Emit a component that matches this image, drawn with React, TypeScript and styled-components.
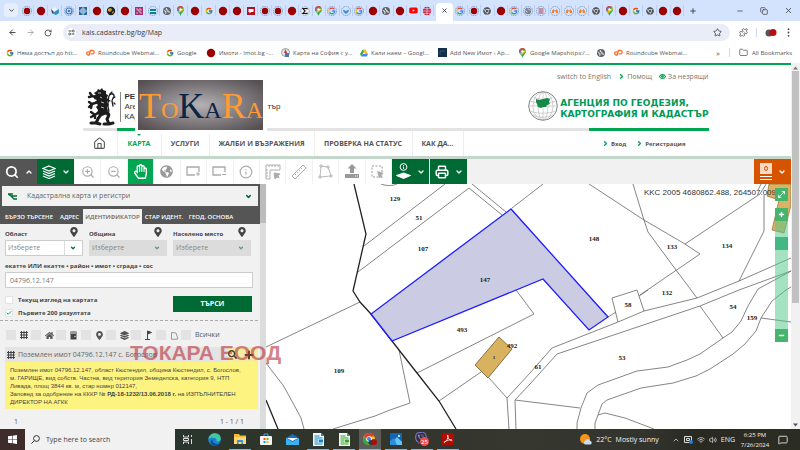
import React from 'react';
import styled, { createGlobalStyle, css } from 'styled-components';
import {
  ArrowLeft, ArrowRight, RotateCw, ChevronDown, ChevronUp, ChevronRight, Star, Puzzle, Folder,
  Search, ZoomIn, ZoomOut, Info, House, Plus, X, Minus, Copy, Printer, EyeIcon,
  MessageSquare, Volume2, Wifi, Check,
} from 'lucide-react';
import { FaYoutube, FaRegHandPaper, FaGlobeAmericas, FaMapMarkerAlt, FaHome, FaChrome, FaViber, FaSearch, FaLayerGroup } from 'react-icons/fa';
import { FcGoogle } from 'react-icons/fc';

const UI = '"Open Sans", "Noto Sans", sans-serif';
const GREEN = '#00a651';
const DARK_GREEN = '#006a35';
const SLATE = '#555555';

const GlobalStyle = createGlobalStyle`
  * { box-sizing: border-box; }
  body { margin: 0; font-family: ${UI}; font-size: 7px; line-height: 10px; color: #555; background: #fff; }
  button { border: 0; padding: 0; margin: 0; background: none; font: inherit; color: inherit; }
  input, select { font: inherit; margin: 0; }
  a { color: inherit; text-decoration: none; }
  svg { display: block; flex: none; }
`;

const Screen = styled.div`
  display: flex;
  flex-direction: column;
  min-height: 100vh;
  overflow: hidden;
`;

/* ---------- browser chrome ---------- */

const TabStrip = styled.div`
  display: flex;
  align-items: stretch;
  height: 21px;
  background: #d3e2fd;
  color: #333;
`;
const TabSearch = styled.button`
  width: 14px;
  height: 14px;
  margin: 3px 2px 0 4px;
  border-radius: 4px;
  background: #e6eefc;
  display: grid;
  place-items: center;
`;
const TabGroup = styled.div<{ $basis: number }>`
  display: flex;
  flex: 0 0 ${(p) => p.$basis}px;
`;
const TabButton = styled.button`
  flex: 1;
  display: grid;
  place-items: center;
  border-right: 1px solid #b9cff5;
  height: 11px;
  margin-top: 5px;
`;
const ActiveTab = styled.button`
  width: 17px;
  margin: 3px 1px 0 2px;
  padding-bottom: 3px;
  background: #fff;
  border-radius: 4px 4px 0 0;
  display: grid;
  place-items: center;
`;
const NewTab = styled.button`
  width: 18px;
  display: grid;
  place-items: center;
`;
const WindowButtons = styled.div`
  display: flex;
  margin-left: auto;
  button { width: 24px; display: grid; place-items: center; }
`;
const AddressRow = styled.div`
  display: flex;
  align-items: center;
  height: 23px;
  padding: 0 7px;
  color: #444;
  gap: 8px;
`;
const NavButton = styled.button`
  width: 10px;
  display: grid;
  place-items: center;
`;
const AddressPill = styled.label`
  flex: 1;
  display: flex;
  align-items: center;
  height: 17px;
  margin-left: 2px;
  padding: 0 8px 0 4px;
  gap: 6px;
  border-radius: 9px;
  background: #eaedf7;
`;
const AddressInput = styled.input`
  flex: 1;
  border: 0;
  background: none;
  padding: 0;
  font-size: 7px;
  color: #3c3c3c;
`;
const Divider = styled.span`
  width: 1px;
  height: 9px;
  background: #c9d9f5;
`;
const BookmarkBar = styled.nav`
  display: flex;
  align-items: center;
  height: 19px;
  padding: 0 8px 2px 6px;
  color: #555;
`;
const Bookmark = styled.a<{ $width: number }>`
  display: flex;
  align-items: center;
  gap: 3px;
  width: ${(p) => p.$width}px;
  font-size: 6px;
  white-space: nowrap;
`;
const BookmarkEnd = styled.div`
  display: flex;
  align-items: center;
  gap: 9px;
  margin-left: auto;
  font-size: 6px;
  a { display: flex; align-items: center; gap: 4px; }
  span { font-size: 8px; }
`;

type Glyph = 'r' | 'R' | 'd' | 'b' | 'q' | 'w' | 'p' | 't' | 'o' | 'm' | 'g' | 'G' | 'k' | 's' | 'h' | 'y' | 'n' | 'c' | 'a' | 'l' | 'x';

function PinGlyph() {
  return (
    <svg width="9" height="10" viewBox="0 0 9 10">
      <path d="M4.5 0C2.6 0 1 1.5 1 3.4 1 5.8 3.8 6.800 4.500 10 5.200 6.800 8 5.800 8 3.400 8 1.500 6.400 0 4.500 0Z" fill="#34a853" />
      <path d="M4.500 0C2.600 0 1 1.500 1 3.400L2 5.200 6.600 .6Z" fill="#ea4335" />
      <path d="M6.600 .6 2 5.200 1 3.400Z" fill="#4285f4" />
      <path d="M2 5.200 7.500 2 8 3.400 3.400 6.900Z" fill="#fbbc04" />
      <circle cx="4.500" cy="3.400" r="1.200" fill="#fff" />
    </svg>
  );
}

function LoopGlyph() {
  return (
    <svg width="9" height="8" viewBox="0 0 9 8" fill="none" stroke="#ff6c2c" strokeWidth="1.300" strokeLinecap="round">
      <path d="M4 2.800H2.300a1.600 1.600 0 0 0 0 3.200H3.200L4.500 1.500H6.500a1.700 1.700 0 0 1 0 3.400H5.300" />
    </svg>
  );
}

function GlobeGlyph({ color = '#5f6368' }: { color?: string }) {
  return (
    <svg width="8" height="8" viewBox="0 0 8 8">
      <circle cx="4" cy="4" r="4" fill={color} />
      <path d="M.8 3.400 3 4.500 2.800 6.800M3.500 1l-.4 1.500 2 .8-.3 1.500 2.200.4" stroke="#fff" strokeWidth=".9" fill="none" />
    </svg>
  );
}

function Favicon({ kind }: { kind: Glyph }) {
  const ring = <circle cx="5" cy="5" r="4.600" fill="none" stroke="#5f7fae" strokeWidth=".7" strokeDasharray="1.500 .8" />;
  if (kind === 'g') return <FcGoogle size={8} />;
  if (kind === 'm') return <PinGlyph />;
  if (kind === 'y') return <FaYoutube size={9} color="#f00" />;
  if (kind === 'o') return <GlobeGlyph />;
  if (kind === 'c') return <FaChrome size={8} color="#555" />;
  return (
    <svg width="10" height="10" viewBox="0 0 10 10">
      {kind === 'r' && <circle cx="5" cy="5" r="4.200" fill="#9b0000" />}
      {kind === 'R' && <>{ring}<circle cx="5" cy="5" r="3.200" fill="#9b0000" /></>}
      {kind === 'd' && <><path d="M1 4 5 1l3 3-3 4-4-1Z" fill="#eef3f8" /><path d="M4 6l5-3v4L6 9 2 7.500Z" fill="#2b8fd0" /><path d="M1 3l3 3-2 1.500Z" fill="#444" /></>}
      {kind === 'b' && <>{ring}<circle cx="5" cy="5" r="3" fill="none" stroke="#4379b2" strokeWidth="1.200" /><circle cx="5" cy="5" r="1.300" fill="#4379b2" /></>}
      {kind === 'q' && <><rect x="1" y="1" width="8" height="8" fill="#24639b" /><path d="M3 3h4v4H3zM1 5h8M5 1v8" stroke="#d3e2fd" strokeWidth=".8" fill="none" /></>}
      {kind === 'w' && <><circle cx="5" cy="5" r="4.200" fill="#222" /><path d="M2 3l3-1 1 2-2 2-2-1ZM6 6l2-1-1 3Z" fill="#c8a83a" /></>}
      {kind === 'p' && <><rect x="1" y="1" width="8" height="8" fill="#a03070" /><path d="M2 3h2v2h2v2h2M6 2v2h2M2 7h2" stroke="#f0d0e0" strokeWidth=".8" fill="none" /></>}
      {kind === 't' && <>{ring}<path d="M2 3h6v2H2zM2 6h6v2H2z" fill="#0c8088" /></>}
      {kind === 'k' && <><rect x="1" y="1" width="8" height="8" fill="#b01020" /><path d="M2.500 3h5v3H5L3.500 7.500V6h-1Z" fill="#fff" /></>}
      {kind === 's' && <><circle cx="5" cy="5" r="4.200" fill="#e8edf6" stroke="#777" strokeWidth=".6" strokeDasharray="1.500 .8" /><path d="M7 3.300V2.500H3L5 5 3 7.500h4V6.700" stroke="#111" strokeWidth="1.200" fill="none" /></>}
      {kind === 'G' && <>{ring}<path d="M7.300 3.200A3 3 0 0 0 2.700 3.200" stroke="#ea4335" strokeWidth="1.300" fill="none" /><path d="M2.700 3.200A3 3 0 0 0 2.600 6.500" stroke="#fbbc04" strokeWidth="1.300" fill="none" /><path d="M2.600 6.500A3 3 0 0 0 6.800 7.200" stroke="#34a853" strokeWidth="1.300" fill="none" /><path d="M6.800 7.200A3 3 0 0 0 7.700 5H5.200" stroke="#4285f4" strokeWidth="1.300" fill="none" /></>}
      {kind === 'h' && <>{ring}<path d="M2 3.500 5 5l3-1.500L7.500 6 5 8 2.500 6Z" fill="#3f8fd4" /></>}
      {kind === 'n' && <><circle cx="5" cy="5" r="4.200" fill="#d3122a" /><path d="M0 5h10M5 0v10M1 2.700h8M1 7.300h8" stroke="#d3e2fd" strokeWidth=".7" /></>}
      {kind === 'a' && <>{ring}<path d="M2 7V5l1.500-2L5 5l1.500-2L8 5v2H6V5.500H4V7Z" fill="#f58220" /></>}
      {kind === 'l' && <>{ring}<path d="M2.500 3h5M2.500 5h5M2.500 7h5" stroke="#a04050" strokeWidth="1" /></>}
      {kind === 'x' && <>{ring}<circle cx="5" cy="5" r="3.200" fill="#7b828c" /><path d="M2.500 4.500 4.500 6M5 2.500l2 2" stroke="#fff" strokeWidth=".8" /></>}
    </svg>
  );
}

const firstTabs = 'RrdbqrwrptomrgrrkR'.split('') as Glyph[];
const secondTabs = 'RrsmGhGroryn'.split('') as Glyph[];
const thirdTabs = 'GRcrGxlaaacmrgcrr'.split('') as Glyph[];

function Tabs({ items, basis }: { items: Glyph[]; basis: number }) {
  return (
    <TabGroup $basis={basis}>
      {items.map((k, i) => (
        <TabButton key={i} aria-label={`Tab ${i + 1}`}><Favicon kind={k} /></TabButton>
      ))}
    </TabGroup>
  );
}

const bookmarks: { width: number; label: string; icon: React.ReactNode }[] = [
  { width: 80, label: 'Няма достъп до htt...', icon: <FcGoogle size={8} /> },
  { width: 80, label: 'Roundcube Webmai...', icon: <LoopGlyph /> },
  { width: 40, label: 'Google', icon: <FcGoogle size={8} /> },
  { width: 75, label: 'Имоти - Imot.bg -...', icon: <Favicon kind="r" /> },
  { width: 79, label: 'Карта на София с у...', icon: <svg width="9" height="9" viewBox="0 0 9 9"><circle cx="4.500" cy="4.500" r="4" fill="#e8e8e8" stroke="#777" strokeWidth=".7" /><path d="M4.500 1 3 5h3Z" fill="#c33" /><rect x="4" y="5" width="4" height="4" fill="#4479b8" /></svg> },
  { width: 78, label: 'Кали наем – Googl...', icon: <svg width="8" height="8" viewBox="0 0 8 8"><path d="M2.700.5h2.600L8 5H5.300Z" fill="#fbbc04" /><path d="M2.700.5 4 2.700 1.300 7.500 0 5Z" fill="#34a853" /><path d="M2.700 5H8L6.700 7.500H1.300Z" fill="#4285f4" /></svg> },
  { width: 80, label: 'Add New Имот ‹ Ар...', icon: <svg width="9" height="9" viewBox="0 0 9 9"><rect width="9" height="9" fill="#12304e" /><path d="M2 7V3h5" stroke="#35506c" fill="none" /></svg> },
  { width: 79, label: 'Google Mapshttps:/...', icon: <PinGlyph /> },
  { width: 17, label: '', icon: <GlobeGlyph /> },
  { width: 80, label: 'Roundcube Webmai...', icon: <LoopGlyph /> },
];

function BrowserChrome() {
  return (
    <header>
      <TabStrip>
        <TabSearch aria-label="Search tabs"><ChevronDown size={7} strokeWidth={3} /></TabSearch>
        <Tabs items={firstTabs} basis={252} />
        <Tabs items={secondTabs} basis={162} />
        <ActiveTab aria-label="Close tab"><X size={7} strokeWidth={3} /></ActiveTab>
        <Tabs items={thirdTabs} basis={230} />
        <NewTab aria-label="New tab"><Plus size={8} strokeWidth={2.500} /></NewTab>
        <WindowButtons>
          <button aria-label="Minimize"><Minus size={8} /></button>
          <button aria-label="Restore"><Copy size={8} /></button>
          <button aria-label="Close"><X size={9} /></button>
        </WindowButtons>
      </TabStrip>
      <AddressRow>
        <NavButton aria-label="Back"><ArrowLeft size={9} strokeWidth={2.500} /></NavButton>
        <NavButton aria-label="Forward"><ArrowRight size={9} color="#999" /></NavButton>
        <NavButton aria-label="Reload"><RotateCw size={8} strokeWidth={2.500} /></NavButton>
        <AddressPill>
          <svg width="9" height="9" viewBox="0 0 9 9">
            <circle cx="4.500" cy="4.500" r="4.500" fill="#fff" />
            <path d="M1.500 3h3M4.500 6h3" stroke="#444" strokeWidth="1" />
            <circle cx="6.300" cy="3" r="1" fill="none" stroke="#444" strokeWidth=".8" />
            <circle cx="2.700" cy="6" r="1" fill="none" stroke="#444" strokeWidth=".8" />
          </svg>
          <AddressInput aria-label="Address" defaultValue="kais.cadastre.bg/bg/Map" />
          <Star size={9} strokeWidth={2.200} />
        </AddressPill>
        <NavButton aria-label="Extensions"><Puzzle size={9} /></NavButton>
        <Divider />
        <NavButton aria-label="Profile">
          <svg width="12" height="8" viewBox="0 0 12 8"><circle cx="4" cy="4" r="3.500" fill="#555" /><circle cx="8" cy="3.500" r="3.500" fill="#b80d12" /></svg>
        </NavButton>
        <NavButton aria-label="Menu">
          <svg width="3" height="9" viewBox="0 0 3 9" fill="#444"><circle cx="1.500" cy="1.200" r=".9" /><circle cx="1.500" cy="4.500" r=".9" /><circle cx="1.500" cy="7.800" r=".9" /></svg>
        </NavButton>
      </AddressRow>
      <BookmarkBar>
        {bookmarks.map((b, i) => (
          <Bookmark key={i} href="#" $width={b.width} aria-label={b.label || 'Bookmark'}>{b.icon}{b.label}</Bookmark>
        ))}
        <BookmarkEnd>
          <span>»</span>
          <Divider />
          <a href="#"><Folder size={9} />All Bookmarks</a>
        </BookmarkEnd>
      </BookmarkBar>
    </header>
  );
}

/* ---------- site header ---------- */

const Site = styled.div`
  flex: 1;
  display: flex;
`;
const SitePage = styled.div`
  flex: 1;
  min-width: 0;
  display: flex;
  flex-direction: column;
  border-top: 2px solid ${GREEN};
`;
const PageScroll = styled.div`
  width: 9px;
  display: flex;
  flex-direction: column;
  align-items: center;
  padding: 3px 0 2px;
  background: #f1f1f1;
`;
const ScrollThumb = styled.div`
  width: 7px;
  height: 232px;
  margin: 1px 0 auto;
  background: #c1c1c1;
`;
const SiteHeader = styled.div`
  position: relative;
  width: 626px;
  max-width: 100%;
  margin: 0 auto;
`;
const UtilityLinks = styled.nav`
  display: flex;
  justify-content: flex-end;
  align-items: center;
  gap: 7px;
  height: 23px;
  color: #777;
  a { display: flex; align-items: center; gap: 2px; }
`;
const BrandRow = styled.div`
  display: flex;
  align-items: center;
  height: 40px;
  padding: 0 0 3px 4px;
`;
const Ministry = styled.div`
  margin-left: 4px;
  padding-left: 4px;
  border-left: 1px solid #888;
  font-family: "Liberation Sans", sans-serif;
  font-size: 8px;
  line-height: 10px;
  color: #333;
  width: 161px;
  div { display: flex; justify-content: space-between; }
`;
const Agency = styled.a`
  display: flex;
  align-items: center;
  gap: 2px;
  margin-left: auto;
  font-family: "DejaVu Sans", sans-serif;
  font-weight: bold;
  font-size: 9px;
  line-height: 11px;
  color: #009a58;
  white-space: nowrap;
  padding-top: 4px;
  svg { margin-bottom: 5px; }
`;
const BrandRule = styled.div`
  display: flex;
  height: 3px;
`;
const RulePart = styled.span<{ $width?: number; $on?: boolean }>`
  flex: ${(p) => (p.$width ? `0 0 ${p.$width}px` : 1)};
  background: ${(p) => (p.$on ? GREEN : '#e3e3e3')};
`;
const MainNav = styled.nav`
  display: flex;
  height: 25px;
  font-weight: bold;
  white-space: nowrap;
`;
const MainLink = styled.a<{ $width: number; $active?: boolean }>`
  position: relative;
  display: grid;
  place-items: center;
  width: ${(p) => p.$width}px;
  border-right: 1px solid #eee;
  color: ${(p) => (p.$active ? GREEN : '#555')};
  ${(p) => p.$active && css`
    &::before {
      content: '';
      position: absolute;
      top: 1px;
      left: 50%;
      margin-left: -4px;
      border: 4px solid transparent;
      border-top-color: ${GREEN};
    }
  `}
`;
const AccountLinks = styled.div`
  display: flex;
  align-items: center;
  gap: 10px;
  margin-left: auto;
  padding-right: 23px;
  font-size: 6px;
  a { display: flex; align-items: center; gap: 2px; }
`;
const TokaraPlate = styled.div`
  position: absolute;
  left: 52px;
  top: 13px;
  padding: 2px 4px 4px 3px;
  background: #fff;
`;

function Lion() {
  return (
    <svg width="29" height="38" viewBox="0 0 29 38">
      <g fill="none" stroke="#1c1c1c" strokeLinecap="round" strokeLinejoin="round">
        <path d="M20 27C25 22 19 20 21 15c1-3 0-5 1-7 1-3 5-3 5 0 0 2-2 3-2 5l1 5" strokeWidth="1.300" />
        <path d="M11 14 5 16 2 14M5 16l-3 3M5 16l-1 4" strokeWidth="2.400" />
        <path d="M10 10 5 8 2 9M5 8 3 5" strokeWidth="2.400" />
        <path d="M12 24 8 27 4 24M8 27l-4 2M8 27v3" strokeWidth="2.400" />
        <path d="M19 25c5 1 2 4 1 6l2 5h-5M22 36l4-1" strokeWidth="3" />
        <path d="M14 25c0 4-3 4-3 6l-2 4H4M9 35l4 1" strokeWidth="3" />
        <path d="M23 6l2-2M26 10l2-1M23 13l-2-1M27 15l1 1" strokeWidth="1.200" />
      </g>
      <path d="M9 7 7 5l3-2 1-2 2 1 2-2 1 2 3 1v3l2 1-1 3 2 2-2 2 2 3-2 2 1 4-1 3-5 2-5-2 1-4-2-3 2-2-3-3 2-2-3-1 1-3-3-1Z" fill="#1c1c1c" />
      <path d="M11 5h3M13 9l2 1M14 14l3 1M14 19l3 1" stroke="#fff" strokeWidth=".7" />
    </svg>
  );
}

function AgencyGlobe() {
  return (
    <svg width="30" height="30" viewBox="0 0 30 30">
      <g fill="none" stroke="#a5a5a5" strokeWidth=".5">
        <circle cx="15" cy="15" r="14.300" stroke="#777" strokeWidth=".9" />
        <ellipse cx="15" cy="15" rx="5" ry="14" /><ellipse cx="15" cy="15" rx="10" ry="14" />
        <path d="M15 1v28M1 15h28M2 10c8 3 18 3 26 0M2 20c8 3 18 3 26 0M5 24c6 3 14 3 20 0M5 6c6 3 14 3 20 0" />
      </g>
      <path d="M8 8l3 1 4-1 4-1 3 1-1 3 1 2-3 1-1 2h-3l-2 1-3-1-1-3-1-2Z" fill="#158a46" />
    </svg>
  );
}

function TokaraLogo() {
  return (
    <svg width="125" height="50" viewBox="0 0 125 50" role="img" aria-label="ToKaRa">
      <defs>
        <radialGradient id="steel" cx=".5" cy=".5" r=".65">
          <stop offset="0" stopColor="#b5b1b3" /><stop offset=".5" stopColor="#858083" /><stop offset="1" stopColor="#565053" />
        </radialGradient>
      </defs>
      <rect width="125" height="50" fill="url(#steel)" />
      <text x="1" y="38" fontFamily="Liberation Serif, serif" fontSize="24" fill="#ff9a35">
        <tspan fontSize="36">T</tspan>O<tspan fontSize="36" fill="#0b2545">K</tspan><tspan fill="#0b2545">A</tspan><tspan fontSize="36">R</tspan>A
      </text>
    </svg>
  );
}

function Header() {
  return (
    <SiteHeader>
      <UtilityLinks>
        <a href="#">switch to English</a>
        <a href="#"><ChevronRight size={7} color={GREEN} strokeWidth={5} />Помощ</a>
        <a href="#"><EyeIcon size={7} color={GREEN} strokeWidth={4} />За незрящи</a>
      </UtilityLinks>
      <BrandRow>
        <Lion />
        <Ministry>
          <b>РЕ</b>
          <div><span>Аге</span><span>тър</span></div>
          КАД
        </Ministry>
        <Agency href="#">
          <AgencyGlobe />
          <span>АГЕНЦИЯ ПО ГЕОДЕЗИЯ,<br />КАРТОГРАФИЯ И КАДАСТЪР</span>
        </Agency>
      </BrandRow>
      <BrandRule>
        <RulePart $width={34} />
        <RulePart $width={20} $on />
        <RulePart />
        <RulePart $width={120} $on />
      </BrandRule>
      <MainNav>
        <MainLink href="#" $width={35} aria-label="Начало"><House size={13} strokeWidth={2} /></MainLink>
        <MainLink href="#" $width={44} $active>КАРТА</MainLink>
        <MainLink href="#" $width={48}>УСЛУГИ</MainLink>
        <MainLink href="#" $width={105}>ЖАЛБИ И ВЪЗРАЖЕНИЯ</MainLink>
        <MainLink href="#" $width={98}>ПРОВЕРКА НА СТАТУС</MainLink>
        <MainLink href="#" $width={51}>КАК ДА...</MainLink>
        <AccountLinks>
          <a href="#"><ChevronRight size={7} color={GREEN} strokeWidth={5} />Вход</a>
          <a href="#"><ChevronRight size={7} color={GREEN} strokeWidth={5} />Регистрация</a>
        </AccountLinks>
      </MainNav>
      <TokaraPlate><TokaraLogo /></TokaraPlate>
    </SiteHeader>
  );
}

/* ---------- toolbar ---------- */

const Toolbar = styled.div`
  display: flex;
  height: 28px;
  border-top: 3px solid #c3d8cb;
  background: #f1f1f1;
`;
const Tool = styled.button<{ $tone?: string; $wide?: boolean }>`
  display: flex;
  align-items: center;
  justify-content: center;
  gap: 6px;
  width: ${(p) => (p.$wide ? 37 : 26)}px;
  margin-right: ${(p) => (p.$tone === SLATE ? 0 : 1)}px;
  color: ${(p) => (p.$tone ? '#fff' : '#aaa')};
  background: ${(p) => p.$tone || '#fff'};
`;
const ToolSet = styled.div`
  display: flex;
  justify-content: space-between;
  width: 317px;
`;
const OrangeTool = styled(Tool)`
  margin: 0 0 0 auto;
`;

function Frame({ mark }: { mark: string }) {
  return (
    <svg width="15" height="13" viewBox="0 0 15 13" fill="none" stroke="#aaa" strokeWidth="1.300">
      <path d="M9 10H1V2h12v5" /><path d={mark} strokeWidth="1" />
    </svg>
  );
}

function ToolbarRow() {
  return (
    <Toolbar>
      <Tool $wide $tone={SLATE} aria-label="Търсене"><Search size={14} strokeWidth={3} /><ChevronUp size={8} strokeWidth={4} /></Tool>
      <Tool $wide $tone={DARK_GREEN} aria-label="Слоеве">
        <svg width="14" height="14" viewBox="0 0 14 14" fill="none" stroke="#fff" strokeWidth="1.200"><path d="M7 1l6 2.500L7 6 1 3.500ZM1 6l6 2.500L13 6M1 8.500 7 11l6-2.500M1 11l6 2.500 6-2.500" /></svg>
        <ChevronDown size={8} strokeWidth={4} />
      </Tool>
      <ToolSet>
        <Tool aria-label="Увеличи"><ZoomIn size={14} /></Tool>
        <Tool aria-label="Намали"><ZoomOut size={14} /></Tool>
        <Tool $tone={GREEN} aria-label="Местене"><FaRegHandPaper size={15} /></Tool>
        <Tool aria-label="Цялата карта"><FaGlobeAmericas size={13} color="#999" /></Tool>
        <Tool aria-label="Увеличи в рамка"><Frame mark="M12 7v4M10 9h4" /></Tool>
        <Tool aria-label="Намали в рамка"><Frame mark="M10 9.500h4" /></Tool>
        <Tool aria-label="Информация"><Info size={14} /></Tool>
        <Tool aria-label="Измерване">
          <svg width="16" height="16" viewBox="0 0 16 16" fill="none" stroke="#b0b0b0"><path d="M1 1h14v5H5v9H1ZM4 1v2M7 1v2M10 1v2M13 1v2M1 6h2M1 9h2M1 12h2" /><path d="M9 9l6 1-2 1.500L14 14l-2-1-2 2Z" fill="#aaa" /></svg>
        </Tool>
        <Tool aria-label="Разстояние">
          <svg width="16" height="16" viewBox="0 0 16 16" fill="none" stroke="#b5b5b5"><path d="M1 12 12 1l3 3L4 15ZM4 10l1 1M6 8l1 1M8 6l1 1M10 4l1 1" /></svg>
        </Tool>
        <Tool aria-label="Площ">
          <svg width="15" height="15" viewBox="0 0 15 15" fill="none" stroke="#bbb"><path d="M3 2 10 3l3 9-11 1ZM2 1h2v2H2ZM9 2h2v2H9ZM12 11h2v2h-2ZM1 12h2v2H1Z" /></svg>
        </Tool>
        <Tool aria-label="Качване">
          <svg width="16" height="15" viewBox="0 0 16 15" fill="#999"><path d="M8 0l4.500 4.500H10V9H6V4.500H3.500ZM1 10h14v4H1Z" /><path d="M11 12h1M13 12h1" stroke="#fff" /></svg>
        </Tool>
        <Tool aria-label="Избор">
          <svg width="14" height="14" viewBox="0 0 14 14" fill="none" stroke="#999"><path d="M1 1h10v11H1Z" strokeDasharray="2 1.500" /><path d="M6 6l7 2-3 1.500L12 13l-2-1-2 1Z" fill="#aaa" stroke="none" /></svg>
        </Tool>
      </ToolSet>
      <Tool $wide $tone={DARK_GREEN} aria-label="Информация за слоеве">
        <svg width="15" height="17" viewBox="0 0 15 17" fill="none" stroke="#fff"><circle cx="7.500" cy="4" r="3.400" /><path d="M7.500 3.500v2.500M7.500 2v1" /><path d="M0.500 12.500 7.500 10l7 2.500-7 3Z" fill="#fff" /></svg>
        <ChevronDown size={8} strokeWidth={4} />
      </Tool>
      <Tool $wide $tone={DARK_GREEN} aria-label="Печат"><Printer size={14} strokeWidth={2.500} /><ChevronDown size={8} strokeWidth={4} /></Tool>
      <OrangeTool $wide $tone="#d65400" aria-label="Кошница">
        <svg width="12" height="18" viewBox="0 0 12 18"><rect width="12" height="11" fill="#fbd9c2" /><ellipse cx="6" cy="5.500" rx="1.500" ry="2" fill="none" stroke="#d65400" /><path d="M0 13.500h12M0 16.500h12" stroke="#fff" /></svg>
        <ChevronDown size={8} strokeWidth={4} />
      </OrangeTool>
    </Toolbar>
  );
}

/* ---------- search panel ---------- */

const Workspace = styled.main`
  position: relative;
  flex: 1;
  display: flex;
`;
const Panel = styled.section`
  display: flex;
  flex-direction: column;
  width: 260px;
  background: #f1f1f1;
`;
const PanelHead = styled.div`
  padding: 2px 2px 0;
  background: ${SLATE};
`;
const RegisterPicker = styled.button`
  display: flex;
  align-items: center;
  gap: 10px;
  width: 100%;
  height: 20px;
  padding: 0 6px;
  background: #f1f1f1;
  color: #666;
  svg:last-child { margin-left: auto; }
`;
const PanelTabs = styled.div`
  display: flex;
  height: 18px;
  padding-top: 3px;
  color: #fff;
  font-size: 6px;
  font-weight: 600;
  white-space: nowrap;
`;
const PanelTab = styled.button<{ $width: number; $active?: boolean }>`
  width: ${(p) => p.$width}px;
  ${(p) => p.$active && css`background: #f1f1f1; color: #666;`}
`;
const SearchForm = styled.form`
  display: flex;
  flex-direction: column;
  padding: 4px 5px 0;
  color: #444;
`;
const FieldRow = styled.div`
  display: grid;
  grid-template-columns: repeat(3, 78px);
  gap: 6px;
`;
const FieldLabel = styled.label`
  display: flex;
  justify-content: space-between;
  align-items: center;
  height: 12px;
  padding-right: 4px;
  font-weight: bold;
  font-size: 6px;
  svg { margin-bottom: 5px; }
`;
const SelectBox = styled.div<{ $muted?: boolean }>`
  display: flex;
  align-items: center;
  height: 16px;
  padding-right: 6px;
  border: 1px solid ${(p) => (p.$muted ? '#dcdcdc' : '#ccc')};
  background: ${(p) => (p.$muted ? '#dcdcdc' : '#fff')};
`;
const Select = styled.select`
  flex: 1;
  appearance: none;
  border: 0;
  background: none;
  padding: 0 2px;
  color: #888;
  opacity: 1;
`;
const PickMark = styled.span`
  display: grid;
  place-items: center;
  align-self: stretch;
  padding-left: 5px;
  border-left: 1px solid #ddd;
`;
const CodeLabel = styled.label`
  margin: 5px 0 1px;
  font-size: 6px;
  font-weight: bold;
`;
const CodeInput = styled.input`
  width: 248px;
  height: 16px;
  padding: 0 4px;
  border: 1px solid #ccc;
  background: #fff;
  color: #777;
`;
const SubmitRow = styled.div`
  display: flex;
  justify-content: space-between;
  align-items: flex-start;
  padding: 5px 3px 0 0;
`;
const TickLabel = styled.label`
  display: flex;
  align-items: center;
  gap: 5px;
  height: 13px;
  font-size: 6px;
  font-weight: bold;
`;
const Tick = styled.span`
  display: grid;
  width: 8px;
  height: 8px;
  background: #fff;
  border: 1px solid #e4e4e4;
  input { grid-area: 1 / 1; appearance: none; width: 6px; height: 6px; }
  svg { grid-area: 1 / 1; pointer-events: none; }
`;
const SearchButton = styled.button`
  width: 79px;
  height: 16px;
  margin-top: 3px;
  background: ${DARK_GREEN};
  color: #fff;
  font-weight: bold;
`;
const Dashes = styled.div`
  margin: 1px 2px 0 0;
  height: 9px;
  border-top: 1px dashed #aaa;
`;
const FilterRow = styled.div`
  display: flex;
  align-items: center;
  height: 12px;
  padding-left: 6px;
  color: #777;
`;
const Filter = styled.label`
  display: flex;
  align-items: center;
  gap: 4px;
  width: 25px;
  color: #555;
  white-space: nowrap;
  input { flex: none; appearance: none; width: 10px; height: 10px; background: #e3e3e3; }
`;
const ResultHead = styled.div`
  display: flex;
  align-items: center;
  height: 15px;
  margin: 6px 2px 0 5px;
  padding: 0 0 0 2px;
  gap: 3px;
  background: #e4e4e4;
  color: #666;
`;
const ResultActions = styled.div`
  display: flex;
  justify-content: space-between;
  align-items: center;
  width: 31px;
  height: 15px;
  margin-left: auto;
  padding: 0 3px 0 1px;
  background: #f3eda3;
  color: #444;
`;
const ResultText = styled.p`
  margin: 0 2px 0 5px;
  padding: 4px 5px 3px;
  background: #fdf380;
  font-family: "Liberation Sans", sans-serif;
  font-size: 6px;
  line-height: 8px;
  color: #444;
  white-space: nowrap;
`;
const Pager = styled.div`
  display: flex;
  justify-content: space-between;
  padding: 8px 16px 0 14px;
  color: #555;
`;
const PanelScroll = styled.div`
  width: 6px;
  background: #dcdcdc;
`;
const PanelThumb = styled.div`
  height: 39px;
  background: #bcbcbc;
`;
const Watermark = styled.div`
  position: absolute;
  left: 130px;
  top: 158px;
  font-family: "Liberation Sans", sans-serif;
  font-weight: bold;
  font-size: 21px;
  line-height: 22px;
  color: #b9303a;
  opacity: .6;
  white-space: nowrap;
`;

function GridGlyph() {
  return (
    <svg width="8" height="8" viewBox="0 0 8 8" stroke="#444" strokeWidth="1" fill="none"><path d="M1.500 0v8M4 0v8M6.500 0v8M0 1.500h8M0 4h8M0 6.500h8" /></svg>
  );
}

const filters: [string, React.ReactNode][] = [
  ['Имот', <GridGlyph />],
  ['Сграда', <FaHome size={9} />],
  ['Обект', <svg width="7" height="9" viewBox="0 0 7 9"><path d="M.5.5h6v8h-6Z" fill="#444" /><path d="M1 2h5" stroke="#eee" /><circle cx="5" cy="5.500" r=".7" fill="#eee" /></svg>],
  ['Точка', <FaMapMarkerAlt size={9} />],
  ['Слой', <FaLayerGroup size={9} />],
  ['Флаг', <svg width="7" height="10" viewBox="0 0 7 10"><path d="M2.500 9V1l4 1.500-4 1.500" fill="#444" stroke="#444" /><path d="M0 9.500h5" stroke="#444" /></svg>],
  ['Полигон', <svg width="9" height="9" viewBox="0 0 9 9" fill="none" stroke="#999"><path d="M1.500 1.500 6 2l2 6-6.500.3Z" /></svg>],
];

function SearchPanel() {
  return (
    <Panel>
      <PanelHead>
        <RegisterPicker>
          <svg width="9" height="7" viewBox="0 0 9 7" fill="none" stroke={DARK_GREEN} strokeWidth="1.300"><path d="M0 1h5M0 1l3 2h6M3 3l3 3h3" /></svg>
          Кадастрална карта и регистри
          <ChevronDown size={7} color={DARK_GREEN} strokeWidth={5} />
        </RegisterPicker>
        <PanelTabs>
          <PanelTab $width={54}>БЪРЗО ТЪРСЕНЕ</PanelTab>
          <PanelTab $width={27}>АДРЕС</PanelTab>
          <PanelTab $width={59} $active>ИДЕНТИФИКАТОР</PanelTab>
          <PanelTab $width={44}>СТАР ИДЕНТ.</PanelTab>
          <PanelTab $width={50}>ГЕОД. ОСНОВА</PanelTab>
        </PanelTabs>
      </PanelHead>
      <SearchForm onSubmit={(e) => e.preventDefault()}>
        <FieldRow>
          {['Област', 'Община', 'Населено място'].map((name, i) => (
            <div key={name}>
              <FieldLabel htmlFor={`place${i}`}>{name}<FaMapMarkerAlt size={10} /></FieldLabel>
              <SelectBox $muted={i > 0}>
                <Select id={`place${i}`} disabled={i > 0}><option>Изберете</option></Select>
                <PickMark><ChevronDown size={6} color={i ? '#5f9a78' : DARK_GREEN} strokeWidth={5} /></PickMark>
              </SelectBox>
            </div>
          ))}
        </FieldRow>
        <CodeLabel htmlFor="code">екатте ИЛИ екатте • район • имот • сграда • сос</CodeLabel>
        <CodeInput id="code" defaultValue="04796.12.147" />
        <SubmitRow>
          <div>
            <TickLabel><Tick><input type="checkbox" /></Tick>Текущ изглед на картата</TickLabel>
            <TickLabel><Tick><input type="checkbox" defaultChecked /><Check size={6} color={GREEN} strokeWidth={4} /></Tick>Първите 200 резултата</TickLabel>
          </div>
          <SearchButton type="submit">ТЪРСИ</SearchButton>
        </SubmitRow>
      </SearchForm>
      <Dashes />
      <FilterRow>
        {filters.map(([name, icon]) => (
          <Filter key={name}><input type="checkbox" aria-label={name} />{icon}</Filter>
        ))}
        <Filter><input type="checkbox" />Всички</Filter>
      </FilterRow>
      <ResultHead>
        <GridGlyph />
        Поземлен имот 04796.12.147 с. Богослов
        <ResultActions>
          <button aria-label="Покажи"><FaSearch size={9} /></button>
          <button aria-label="Добави"><Plus size={12} strokeWidth={4} /></button>
        </ResultActions>
      </ResultHead>
      <ResultText>
        Поземлен имот 04796.12.147, област Кюстендил, община Кюстендил, с. Богослов,<br />
        м. ГАРИЩЕ, вид собств. Частна, вид територия Земеделска, категория 9, НТП<br />
        Ливада, площ 3844 кв. м, стар номер 012147,<br />
        Заповед за одобрение на КККР № <b>РД-18-1232/13.06.2018 г.</b> на ИЗПЪЛНИТЕЛЕН<br />
        ДИРЕКТОР НА АГКК
      </ResultText>
      <Pager><span>1</span><span>1 - 1 / 1</span></Pager>
    </Panel>
  );
}

/* ---------- map ---------- */

const MapPane = styled.section`
  position: relative;
  flex: 1;
  min-width: 0;
  overflow: hidden;
  background: #fff;
`;
const MapCanvas = styled.svg`
  position: absolute;
  inset: 0;
  width: 100%;
  height: 100%;
`;
const Coordinates = styled.div`
  position: absolute;
  right: 15px;
  top: 4px;
  font-family: "Liberation Sans", sans-serif;
  font-size: 8px;
  color: #333;
  white-space: nowrap;
`;
const ZoomRail = styled.div`
  position: absolute;
  right: 3px;
  top: 4px;
  width: 13px;
  display: flex;
  flex-direction: column;
`;
const RailButton = styled.button<{ $apart?: boolean }>`
  display: grid;
  place-items: center;
  height: 13px;
  margin-bottom: ${(p) => (p.$apart ? 7 : 0)}px;
  background: #45b56d;
  color: #fff;
`;
const RailTrack = styled.div`
  height: 108px;
  padding-top: 16px;
  background: #54c88b88;
`;
const RailHandle = styled.div`
  height: 13px;
  background: #42b883;
`;

const boundaries = [
  'M364 246 445 184M358 272 469 188 502 215M472 184 506 212M512 208 543 184',
  'M381 184C386 186 393 186 397 184',
  'M589 184 644 220 685 244 700 254 640 295',
  'M633 184 644 220 648 232 676 270 697 298',
  'M685 244 760 194 766 184M764 195V231L739 281M758 190 761 184',
  'M515 400 530 384 557 354 700 306 739 290 791 271 758 289 748 306 741 321 732 332 723 338 700 354 687 360 668 367 637 371 598 385 587 393 581 408 577 423V429',
  'M489 378 507 398 530 373 552 348 618 322 644 311 697 298 739 281 791 258',
  'M791 287 786 290 772 301 761 318 756 331 745 344 733 354 710 369 696 376 673 383 641 388 607 400 602 404 598 415 595 423V429',
  'M761 318 791 322M700 306 723 338M598 415 605 413 625 418 654 429M507 398 509 429M515 400 516 429M515 400 580 408',
  'M618 322 612 298 637 290 644 311M608 317 616 312M639 296 648 290',
  'M516 290 534 314 530 316 417 373M439 401 481 372',
  'M399 350 410 403 390 410 375 416 333 429M266 347 360 302',
  'M266 363 272 371 283 385 293 403 301 418 304 429',
];
const parcelLabels: [number, number, string][] = [
  [395, 201, '129'], [419, 220, '51'], [423, 251, '107'], [485, 282, '147'], [594, 241, '148'],
  [672, 249, '133'], [727, 248, '134'], [667, 295, '132'], [628, 307, '58'], [733, 309, '54'],
  [752, 320, '159'], [622, 360, '53'], [538, 369, '61'], [462, 332, '493'], [512, 348, '492'], [339, 373, '109'],
];

function CadastreMap() {
  return (
    <MapPane>
      <MapCanvas viewBox="266 184 525 245" preserveAspectRatio="xMinYMin slice">
        <g fill="none" stroke="#666" strokeWidth=".8">
          {boundaries.map((d) => <path key={d} d={d} />)}
        </g>
        <path d="M354 184 366 234 353 291 360 302 371 314 392 341 399 350 417 373 439 401 456 429M266 400 278 429" fill="none" stroke="#222" strokeWidth="1.300" />
        <path d="M769 184H791V205L784 233 772 230 779 200 767 196Z" fill="#dcb364" stroke="#8a6a30" strokeWidth=".7" />
        <path d="M511 209 371 314 392 341 543 279 589 330 608 317Z" fill="#cbcbe4" stroke="#1d1dff" strokeWidth="1.300" />
        <path d="M499 337 512 349 488 378 475 365Z" fill="#d9b25f" stroke="#6b5a34" strokeWidth=".8" />
        <g fontFamily="Liberation Serif, serif" fontWeight="bold" fontSize="7" textAnchor="middle" fill="#222">
          {parcelLabels.map(([x, y, t]) => <text key={t} x={x} y={y}>{t}</text>)}
          <text x="494" y="359" fontSize="5">1</text>
        </g>
      </MapCanvas>
      <Coordinates>KKC 2005 4680862.488, 264507.009</Coordinates>
      <ZoomRail>
        <RailButton $apart aria-label="Цял екран">
          <svg width="7" height="7" viewBox="0 0 7 7" fill="#fff"><path d="M3.500 0H7v3.500ZM0 3.500V7h3.500Z" /><path d="M1.500 5.500l4-4" stroke="#fff" /></svg>
        </RailButton>
        <RailButton aria-label="Приближи"><Plus size={7} strokeWidth={5} /></RailButton>
        <RailTrack><RailHandle /></RailTrack>
        <RailButton aria-label="Отдалечи"><Minus size={7} strokeWidth={5} /></RailButton>
      </ZoomRail>
    </MapPane>
  );
}

/* ---------- taskbar ---------- */

const Taskbar = styled.footer`
  display: flex;
  align-items: stretch;
  height: 21px;
  color: #f2f2f2;
  background: linear-gradient(90deg, #3d2c2a 0, #3d2c2a 25px, #29352c 180px, #30352b 300px, #36372f 520px, #32332d 650px, #292922 700px, #2c2d22 100%);
`;
const StartButton = styled.button`
  width: 25px;
  display: grid;
  place-items: center;
`;
const TaskSearch = styled.label`
  display: flex;
  align-items: center;
  gap: 6px;
  width: 150px;
  padding-left: 6px;
  background: #f1f1f1;
  color: #444;
  input { flex: 1; min-width: 0; border: 0; padding: 0; background: none; font-size: 7px; }
  input::placeholder { color: #444; opacity: 1; }
`;
const AppButton = styled.button<{ $open?: boolean; $current?: boolean }>`
  display: grid;
  place-items: center;
  width: 22px;
  margin: 0 2px;
  border-bottom: 1px solid ${(p) => (p.$open ? '#76b9ed' : 'transparent')};
  background: ${(p) => (p.$current ? '#5c5d56' : 'transparent')};
`;
const Tray = styled.div`
  display: flex;
  align-items: center;
  gap: 4px;
  margin-left: auto;
  padding-right: 12px;
  white-space: nowrap;
`;
const Weather = styled.button`
  display: flex;
  align-items: center;
  gap: 4px;
  margin-right: 9px;
`;
const Clock = styled.time`
  width: 32px;
  margin-right: 3px;
  font-size: 6px;
  line-height: 10px;
  text-align: center;
`;

function DocIcon({ color }: { color: string }) {
  return (
    <svg width="11" height="13" viewBox="0 0 11 13"><path d="M0 0h8l3 3v10H0Z" fill="#eef6fb" /><path d="M8 0v3h3Z" fill={color} /><path d="M1.500 3h5M1.500 5h8M1.500 7h4M1.500 9h4M1.500 11h8" stroke={color} /><path d="M6 6.500h4v3H6Z" fill={color} /></svg>
  );
}

const apps: { name: string; open?: boolean; current?: boolean; icon: React.ReactNode }[] = [
  { name: 'Task view', icon: <svg width="10" height="9" viewBox="0 0 10 9" fill="none" stroke="#ddd"><path d="M.5 0v2h5V0M.5 9V7h5v2M.5 3.500h5v2h-5ZM8.500 0v2M8.500 4v5" /></svg> },
  { name: 'Edge', icon: <svg width="13" height="13" viewBox="0 0 13 13"><circle cx="6.500" cy="6.500" r="6.300" fill="#1584d2" /><path d="M.5 6C1 2 4 .2 7 .2c4 0 6 3 5.800 5.600-.2 2-2 3-4.300 2.600C9 7 8.500 5 6 4.700 3.500 4.500 1.500 5 .5 6Z" fill="#43c8a0" /><path d="M4.500 6.500c-.5 3 2 5 6.500 4.500-2 2-6 2.500-8 0-1-2 0-4 1.500-4.500Z" fill="#0a4c9a" /></svg> },
  { name: 'Explorer', open: true, icon: <svg width="12" height="10" viewBox="0 0 12 10"><path d="M0 0h5l1 1.500h6V10H0Z" fill="#f4b63c" /><path d="M0 3h12v7H0Z" fill="#ffd773" /><path d="M3 6h6v4H7.500V8h-3v2H3Z" fill="#3b8fd6" /></svg> },
  { name: 'Store', icon: <svg width="12" height="12" viewBox="0 0 12 12"><path d="M4 3V1h4v2" fill="none" stroke="#45a5e8" /><rect y="3" width="12" height="9" rx="1" fill="#f5f5f5" /><path d="M3.500 5h2v2h-2Z" fill="#f25022" /><path d="M6.500 5h2v2h-2Z" fill="#7fba00" /><path d="M3.500 8h2v2h-2Z" fill="#00a4ef" /><path d="M6.500 8h2v2h-2Z" fill="#ffb900" /></svg> },
  { name: 'Mail', icon: <svg width="13" height="11" viewBox="0 0 13 11"><path d="M0 4 6.500 0 13 4v7H0Z" fill="#1273c4" /><path d="M1 4h11L6.500 7Z" fill="#fff" /><path d="M0 4l6.500 4L13 4v7H0Z" fill="#3cb1f0" /></svg> },
  { name: 'Writer', open: true, icon: <DocIcon color="#1685c8" /> },
  { name: 'Calc', open: true, icon: <DocIcon color="#36a420" /> },
  { name: 'Chrome', open: true, current: true, icon: <svg width="14" height="13" viewBox="0 0 14 13"><circle cx="6" cy="6" r="6" fill="#f5c518" /><path d="M.8 3A6 6 0 0 1 11.500 3.500H6L4 7Z" fill="#e33b2e" /><path d="M.8 3 4 8l3 0-1.500 4A6 6 0 0 1 .8 3Z" fill="#2da94f" /><circle cx="6" cy="6" r="2.700" fill="#fff" /><circle cx="6" cy="6" r="2" fill="#3f82ee" /><circle cx="8" cy="9.500" r="2.500" fill="#333" /><circle cx="11" cy="9" r="3" fill="#a80d12" /></svg> },
  { name: 'Photos', open: true, icon: <svg width="12" height="12" viewBox="0 0 12 12"><rect width="12" height="12" rx="1" fill="#1267b4" /><path d="M0 12 7 4l5 5v3Z" fill="#63c5f4" /><path d="M0 8l4-3 3 7H0Z" fill="#2d8fdb" /><circle cx="9" cy="3" r="1" fill="#fff" /></svg> },
  { name: 'Viber', open: true, icon: <svg width="14" height="14" viewBox="0 0 14 14"><FaViber size={12} color="#8f80ff" /><circle cx="9.500" cy="9.500" r="4.500" fill="#f04a4a" /><text x="9.500" y="11.500" fontSize="6" fill="#fff" textAnchor="middle" fontFamily="Open Sans">25</text></svg> },
  { name: 'Acrobat', open: true, icon: <svg width="12" height="12" viewBox="0 0 12 12"><rect width="12" height="12" rx="1" fill="#b30b00" /><path d="M2 9.500C4.500 8.500 6.500 5 6 2.500 5.500 1 5 3 6.500 5.500 8 8 10.500 8 10 7 9.500 6 4 7.500 2 9.500Z" stroke="#fff" strokeWidth=".8" fill="none" /></svg> },
];

function WindowsTaskbar() {
  return (
    <Taskbar>
      <StartButton aria-label="Start">
        <svg width="9" height="9" viewBox="0 0 9 9" fill="#fff"><path d="M0 1.300 4 .8v3.400H0ZM4.600.7 9 0v4.200H4.600ZM0 4.800h4v3.400l-4-.5ZM4.600 4.800H9V9l-4.400-.7Z" /></svg>
      </StartButton>
      <TaskSearch>
        <svg width="9" height="9" viewBox="0 0 9 9" fill="none" stroke="#333"><circle cx="5.500" cy="3.500" r="2.900" /><path d="M3.400 5.600.4 8.600" /></svg>
        <input placeholder="Type here to search" aria-label="Search" />
      </TaskSearch>
      {apps.map((a) => (
        <AppButton key={a.name} aria-label={a.name} $open={a.open} $current={a.current}>{a.icon}</AppButton>
      ))}
      <Tray>
        <Weather>
          <svg width="12" height="11" viewBox="0 0 12 11"><circle cx="5" cy="5" r="5" fill="#f7941d" /><path d="M5 10.500a2.200 2.200 0 0 1 .5-4A2.700 2.700 0 0 1 10.300 7a1.800 1.800 0 0 1 0 3.500Z" fill="#c8dcf5" /></svg>
          <span>22°C</span><span>Mostly sunny</span>
        </Weather>
        <ChevronUp size={8} />
        <svg width="9" height="9" viewBox="0 0 9 9" fill="none" stroke="#ddd"><path d="M.5 1.500h7v6h-7ZM2.500 3.500h3v2h-3Z" /><circle cx="7" cy="7" r="2" fill="#1f7fd6" stroke="none" /></svg>
        <Wifi size={8} />
        <Volume2 size={8} />
        <span>ENG</span>
        <Clock>6:25 PM<br />7/26/2024</Clock>
        <MessageSquare size={10} />
      </Tray>
    </Taskbar>
  );
}

export default function App() {
  return (
    <Screen>
      <GlobalStyle />
      <BrowserChrome />
      <Site>
        <SitePage>
          <Header />
          <ToolbarRow />
          <Workspace>
            <SearchPanel />
            <PanelScroll><PanelThumb /></PanelScroll>
            <CadastreMap />
            <Watermark>ТОКАРА ЕООД</Watermark>
          </Workspace>
        </SitePage>
        <PageScroll>
          <svg width="5" height="4" viewBox="0 0 5 4"><path d="M0 3.500 2.500.5 5 3.500Z" fill="#777" /></svg>
          <ScrollThumb />
          <svg width="5" height="4" viewBox="0 0 5 4"><path d="M0 .5 2.500 3.500 5 .5Z" fill="#555" /></svg>
        </PageScroll>
      </Site>
      <WindowsTaskbar />
    </Screen>
  );
}
